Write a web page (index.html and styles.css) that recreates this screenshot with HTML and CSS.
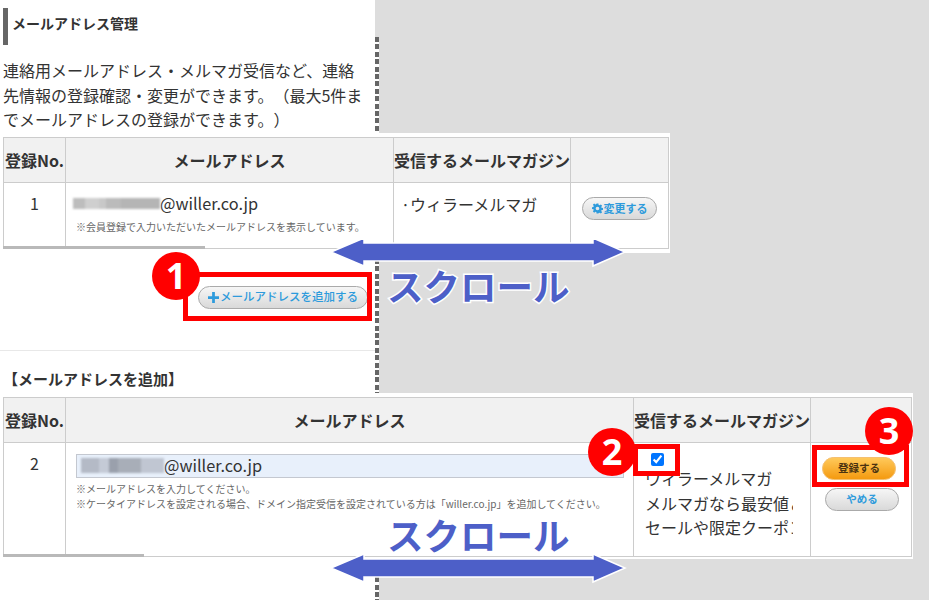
FILE: index.html
```html
<!DOCTYPE html>
<html lang="ja">
<head>
<meta charset="utf-8">
<title>メールアドレス管理</title>
<link rel="stylesheet" href="styles.css">
</head>
<body>
<main class="page">
  <h2 class="title"><span>メールアドレス管理</span></h2>
  <p class="intro">連絡用メールアドレス・メルマガ受信など、連絡先情報の登録確認・変更ができます。（最大5件までメールアドレスの登録ができます。）</p>

  <div class="card card-first">
    <table class="grid grid-first">
      <colgroup><col class="c-no"><col class="c-mail1"><col class="c-mag"><col class="c-act1"></colgroup>
      <thead><tr><th>登録No.</th><th>メールアドレス</th><th>受信するメールマガジン</th><th></th></tr></thead>
      <tbody>
        <tr>
          <td class="num">1</td>
          <td class="mail-cell">
            <div class="mail"><i class="blur"></i>@willer.co.jp</div>
            <p class="note note-first">※会員登録で入力いただいたメールアドレスを表示しています。</p>
          </td>
          <td class="mag">·ウィラーメルマガ</td>
          <td class="act">
            <button class="pill pill-small" type="button">
              <svg class="gear" viewBox="0 0 24 24" aria-hidden="true"><path d="M10 1h4l.6 3.2 2 .8L19.3 3l2.8 2.8-2 2.7.8 2 3.1.5v4l-3.1.5-.8 2 2 2.7-2.8 2.8-2.7-2-2 .8L14 23h-4l-.6-3.2-2-.8L4.700 21l-2.800-2.800 2-2.700-.8-2L0 13V9l3.100-.5.8-2-2-2.700L4.700 1l2.700 2 2-.8zM12 8a4 4 0 1 0 0 8 4 4 0 0 0 0-8z" fill-rule="evenodd"/></svg>変更する
            </button>
          </td>
        </tr>
      </tbody>
    </table>
    <i class="bar bar-first"></i>
  </div>

  <div class="add-row">
    <button class="pill pill-add" type="button">
      <svg class="plus" viewBox="0 0 12 12" aria-hidden="true"><path d="M4.500 0h3v4.500H12v3H7.500V12h-3V7.500H0v-3h4.500z"/></svg>メールアドレスを追加する
    </button>
  </div>

  <h3 class="sub">【メールアドレスを追加】</h3>

  <div class="card card-second">
    <table class="grid grid-second">
      <colgroup><col class="c-no"><col class="c-mail2"><col class="c-mag"><col class="c-act2"></colgroup>
      <thead><tr><th>登録No.</th><th>メールアドレス</th><th>受信するメールマガジン</th><th></th></tr></thead>
      <tbody>
        <tr>
          <td class="num">2</td>
          <td class="mail-cell">
            <div class="field"><i class="blur blur-field"></i>@willer.co.jp</div>
            <p class="note">※メールアドレスを入力してください。</p>
            <p class="note">※ケータイアドレスを設定される場合、ドメイン指定受信を設定されている方は「willer.co.jp」を追加してください。</p>
          </td>
          <td class="mag-edit">
            <input class="check" type="checkbox" checked aria-label="ウィラーメルマガ">
            <div class="mag-clip">
              <div>ウィラーメルマガ</div>
              <div>メルマガなら最安値＆</div>
              <div>セールや限定クーポン</div>
            </div>
          </td>
          <td class="act act-stack">
            <button class="pill pill-go" type="button">登録する</button>
            <button class="pill pill-stop" type="button">やめる</button>
          </td>
        </tr>
      </tbody>
    </table>
    <i class="bar bar-second"></i>
  </div>
</main>

<i class="dash"></i>

<i class="box box-a"></i>
<i class="box box-b"></i>
<i class="box box-c"></i>
<b class="badge badge-a">1</b>
<b class="badge badge-b">2</b>
<b class="badge badge-c">3</b>

<svg class="arrow arrow-a" viewBox="0 0 300 36" aria-hidden="true"><path d="M1 18 34 4v5h229V4l32 14-32 14v-5H34v5z"/></svg>
<svg class="arrow arrow-b" viewBox="0 0 300 36" aria-hidden="true"><path d="M1 18 34 4v5h229V4l32 14-32 14v-5H34v5z"/></svg>
<span class="scroll scroll-a">スクロール</span>
<span class="scroll scroll-b">スクロール</span>
</body>
</html>
```
FILE: styles.css
```css
* { box-sizing: border-box; }
html, body { margin: 0; padding: 0; }
body {
  position: relative;
  width: 929px;
  height: 600px;
  overflow: hidden;
  background: #dddddd;
  color: #333;
  font-family: "Noto Sans CJK JP", "Noto Sans", sans-serif;
  text-spacing-trim: space-all;
}
.page {
  width: 375px;
  height: 600px;
  padding-top: 8px;
  background: #fff;
}
.title {
  display: flex;
  align-items: center;
  height: 37px;
  margin: 0 0 13px 3px;
  padding: 0 0 7px 4px;
  border-left: 5px solid #666;
  font-size: 14px;
  line-height: 1;
  font-weight: 700;
}
.intro {
  margin: 0;
  padding-left: 3px;
  width: 368px;
  font-size: 16px;
  line-height: 24.5px;
  height: 75px;
}
.card {
  position: relative;
  z-index: 2;
  padding: 4px 2px 2px 3px;
  background: #fff;
}
.card-first { width: 670px; padding-bottom: 4px; }
.card-second { width: 913px; }
.grid {
  border-collapse: collapse;
  table-layout: fixed;
  background: #fff;
}
.grid-first { width: 665px; }
.grid-second { width: 908px; }
.c-no { width: 62px; }
.c-mail1 { width: 328px; }
.c-mail2 { width: 568px; }
.c-mag { width: 177px; }
.c-act1 { width: 98px; }
.c-act2 { width: 101px; }
.grid th, .grid td { border: 1px solid #ccc; padding: 0; }
.grid th {
  height: 45px;
  background: #f1f1f1;
  font-size: 16px;
  font-weight: 700;
  text-align: center;
  white-space: nowrap;
  overflow: hidden;
}
.grid td { vertical-align: top; font-size: 16px; }
.grid-first td { height: 66px; }
.grid-second td { height: 114px; }
.num { text-align: center; padding-top: 8px !important; line-height: 24px; }
.mail-cell { padding: 0 0 0 10px !important; }
.mail {
  display: flex;
  align-items: center;
  height: 24px;
  margin: 8px 0 0 -3px;
  font-size: 16.3px;
  line-height: 24px;
}
.blur {
  display: block;
  flex: none;
  width: 87px;
  height: 11px;
  background: linear-gradient(90deg, #bdbdbd 0 14%, #cfcfcf 14% 30%, #c8c8c8 30% 38%, #bbb 38% 55%, #b5b5b5 55% 100%);
  filter: blur(1px);
}
.blur-field {
  width: 83px;
  height: 15px;
  background: linear-gradient(90deg, #b4bac6 0 22%, #c4cad6 22% 34%, #9aa0ac 34% 44%, #a8aeb8 44% 72%, #c0c6d2 72% 100%);
}
.note {
  margin: 0;
  font-size: 10px;
  line-height: 15px;
  color: #666;
  white-space: nowrap;
}
.note-first { margin-top: 4px; }
.field {
  display: flex;
  align-items: center;
  width: 548px;
  height: 24px;
  margin: 11px 0 3px;
  padding: 0 0 2px 4px;
  background: #e8f0fb;
  border: 1px solid #c4c8d0;
  font-size: 16.3px;
}
.mag { padding: 9px 0 0 7px !important; line-height: 24px; }
.act { text-align: center; }
.pill {
  display: flex;
  align-items: center;
  justify-content: center;
  margin: 0;
  padding: 0 0 1px;
  height: 23px;
  border: 1px solid #aaa;
  border-radius: 12px;
  background: linear-gradient(#f6f6f6, #d9d9d9);
  color: #2e9bdc;
  font-family: inherit;
  font-size: 11px;
  line-height: 1;
  font-weight: 500;
}
.pill-small { width: 75px; margin: 14px 0 0 11px; font-weight: 700; }
.gear { width: 11px; height: 11px; fill: #2e9bdc; margin-right: 1px; }
.add-row {
  display: flex;
  justify-content: flex-end;
  height: 98px;
  padding: 33px 7px 0 0;
  border-bottom: 1px solid #e8e8e8;
}
.pill-add { width: 170px; font-size: 11.5px; }
.plus { width: 11px; height: 11px; fill: #2e9bdc; margin-right: 1px; }
.sub {
  margin: 0;
  height: 42px;
  padding: 18px 0 0 3px;
  font-size: 15px;
  line-height: 20px;
  font-weight: 700;
}
.mag-edit { padding: 0 !important; }
.check {
  display: block;
  width: 13px;
  height: 13px;
  margin: 10px 0 0 17px;
}
.mag-clip {
  width: 148px;
  margin-left: 11px;
  overflow: hidden;
  white-space: nowrap;
  line-height: 24.5px;
}
.act-stack { padding: 14px 0 0 !important; }
.pill-go {
  width: 74px;
  margin-left: 11px;
  border-color: #f5c070;
  background: linear-gradient(#ffc95a, #f49a10);
  color: #4a3210;
  font-size: 10.5px;
  font-weight: 700;
}
.pill-stop { width: 74px; margin: 8px 0 0 14px; font-size: 10.5px; font-weight: 700; }
.bar {
  position: absolute;
  left: 3px;
  height: 3px;
  background: #b9b9b9;
}
.bar-first { width: 202px; bottom: 4px; }
.bar-second { width: 141px; bottom: 2px; }
.dash {
  position: absolute;
  z-index: 1;
  left: 375px;
  top: 37px;
  width: 4px;
  height: 563px;
  background: repeating-linear-gradient(#666 0 5px, #fff 5px 7.400px);
}
.box {
  position: absolute;
  z-index: 5;
  border: 5px solid #f00;
}
.box-a { left: 183px; top: 272px; width: 189px; height: 49px; }
.box-b { left: 633px; top: 444px; width: 47px; height: 32px; }
.box-c { left: 812px; top: 445px; width: 97px; height: 42px; }
.badge {
  position: absolute;
  z-index: 6;
  display: flex;
  align-items: center;
  justify-content: center;
  width: 48px;
  height: 48px;
  border-radius: 50%;
  background: #f00;
  color: #fff;
  font-family: "Noto Sans", sans-serif;
  font-size: 36px;
  line-height: 1;
  font-weight: 700;
}
.badge-a { left: 152px; top: 252px; }
.badge-b { left: 588px; top: 428px; }
.badge-c { left: 865px; top: 407px; }
.arrow {
  position: absolute;
  z-index: 4;
  width: 300px;
  height: 36px;
  fill: #4d5fc8;
  stroke: #fff;
  stroke-width: 1.500;
  overflow: visible;
}
.arrow-a { left: 330px; top: 234px; }
.arrow-b { left: 330px; top: 550px; }
.scroll {
  position: absolute;
  z-index: 4;
  left: 387px;
  font-size: 36.500px;
  line-height: 40px;
  font-weight: 700;
  color: #4d5fc8;
  -webkit-text-stroke: 3px #fff;
  paint-order: stroke fill;
  white-space: nowrap;
}
.scroll-a { top: 266px; }
.scroll-b { top: 515px; }
```
